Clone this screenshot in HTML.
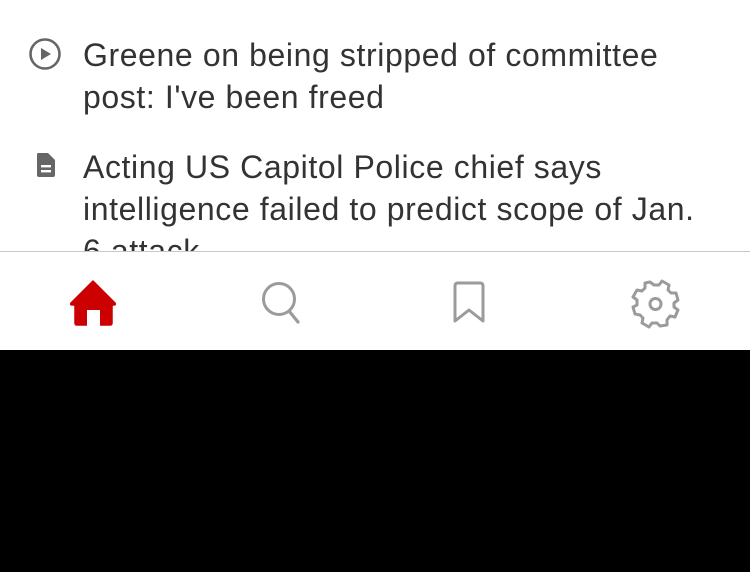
<!DOCTYPE html>
<html><head><style>
body{margin:0;width:750px;height:572px;background:#000;overflow:hidden;font-family:"Liberation Sans",sans-serif;}
.top{position:absolute;left:0;top:0;width:750px;height:251px;background:#fff;overflow:hidden;}
.item{position:absolute;left:83px;white-space:nowrap;font-size:32px;letter-spacing:0.6px;line-height:42px;color:#333;}
.nav{position:absolute;left:0;top:251px;width:750px;height:99px;background:#fff;border-top:1px solid #c8c8c8;box-sizing:border-box;}
svg{position:absolute;}
</style></head><body>
<div class="top">
<svg style="left:28px;top:37px" width="34" height="34" viewBox="0 0 34 34"><circle cx="17" cy="17" r="14.5" fill="none" stroke="#666" stroke-width="2.6"/><path d="M13 11 L23 17 L13 23Z" fill="#666"/></svg>
<div class="item" style="top:34px">Greene on being stripped of committee<br>post: I've been freed</div>
<svg style="left:36px;top:152px" width="20" height="26" viewBox="0 0 20 26"><path d="M2 1 H12 L19 8 V23 Q19 25 17 25 H3 Q1 25 1 23 V3 Q1 1 2 1Z" fill="#666"/><rect x="5" y="13" width="10" height="2.4" fill="#fff"/><rect x="5" y="18" width="10" height="2.4" fill="#fff"/></svg>
<div class="item" style="top:146px">Acting US Capitol Police chief says<br>intelligence failed to predict scope of Jan.<br>6 attack</div>
</div>
<div class="nav">
<svg style="left:68px;top:27px" width="50" height="47" viewBox="0 0 50 47"><path d="M25 2 L47 24 Q48 26 46 26 L44 26 V44 Q44 46 42 46 H9 Q7 46 7 44 V26 L4 26 Q2 26 3 24Z" fill="#cc0000" stroke="#cc0000" stroke-width="1.5" stroke-linejoin="round"/><rect x="19" y="31" width="13" height="16" fill="#fff"/></svg>
<svg style="left:260px;top:27px" width="44" height="46" viewBox="0 0 44 46"><circle cx="19" cy="20" r="15.5" fill="none" stroke="#9b9b9b" stroke-width="3"/><path d="M29 32 L38 43" stroke="#9b9b9b" stroke-width="3.2" stroke-linecap="round"/></svg>
<svg style="left:451px;top:29px" width="36" height="44" viewBox="0 0 36 44"><path d="M4 40 V5 Q4 2 7 2 H29 Q32 2 32 5 V40 L18 29Z" fill="none" stroke="#9b9b9b" stroke-width="3" stroke-linejoin="round"/></svg>
<svg style="left:629px;top:25px" width="52" height="52" viewBox="0 0 52 52"><path d="M21 5 L25 8 L30 8 L33 4 L40 8 L39 13 L42 16 L47 16 L49 23 L45 26 L45 30 L49 33 L46 40 L41 39 L38 43 L38 48 L31 49 L28 46 L23 46 L20 50 L13 46 L14 41 L11 38 L6 37 L4 30 L8 28 L8 23 L4 20 L8 13 L13 14 L16 11 L16 6Z" fill="none" stroke="#9b9b9b" stroke-width="3" stroke-linejoin="round"/><circle cx="26.5" cy="27" r="5.5" fill="none" stroke="#9b9b9b" stroke-width="3"/></svg>
</div>
</body></html>
